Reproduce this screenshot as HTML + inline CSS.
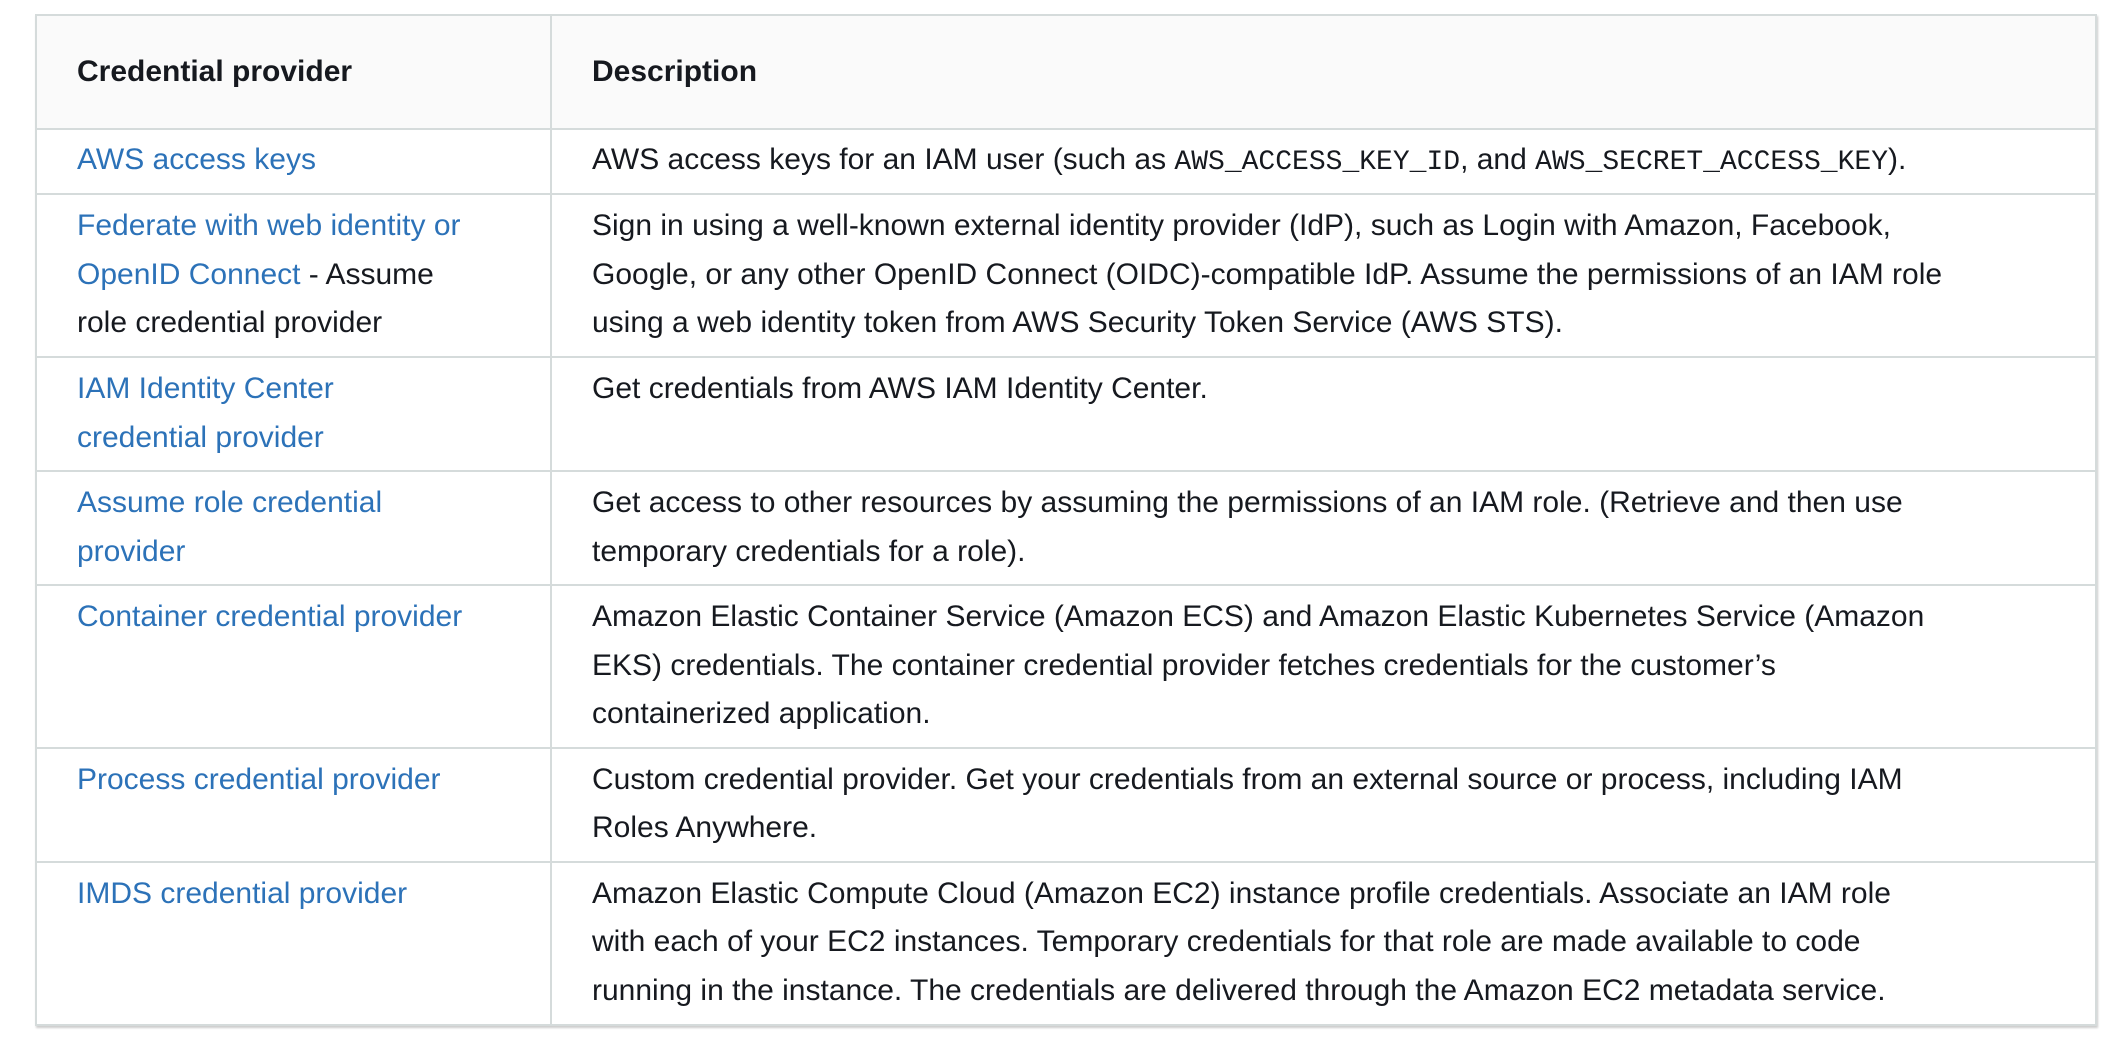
<!DOCTYPE html>
<html><head><meta charset="utf-8"><style>
html,body{margin:0;padding:0;background:#fff;width:2120px;height:1048px;overflow:hidden}
body{font-family:"Liberation Sans",sans-serif;font-size:30px;color:#16191f}
table{position:absolute;left:35px;top:14px;width:2062px;border-collapse:collapse;border:2px solid #d5dbdb;box-shadow:1px 2px 2px rgba(0,0,0,.2)}
td,th{border:2px solid #d5dbdb;vertical-align:top;text-align:left;padding:7px 40px 8px 40px;line-height:48.5px;white-space:nowrap}
th{background:#fafafa;font-weight:bold;vertical-align:middle;padding-top:0;padding-bottom:0}
td:first-child,th:first-child{width:433px}
a{color:#2c72b8;text-decoration:none}
code{font-family:"Liberation Mono",monospace;font-size:28px;line-height:1}
</style></head><body>
<table>
<tr style="height:114px"><th>Credential provider</th><th>Description</th></tr>
<tr style="height:65px"><td style="padding-top:6px;padding-bottom:6px"><a>AWS access keys</a></td><td style="padding-top:6px;padding-bottom:6px">AWS access keys for an IAM user (such as <code>AWS_ACCESS_KEY_ID</code>, and <code>AWS_SECRET_ACCESS_KEY</code>).</td></tr>
<tr style="height:163px"><td><a>Federate with web identity or<br>OpenID Connect</a> - Assume<br>role credential provider</td><td>Sign in using a well-known external identity provider (IdP), such as Login with Amazon, Facebook,<br>Google, or any other OpenID Connect (OIDC)-compatible IdP. Assume the permissions of an IAM role<br>using a web identity token from AWS Security Token Service (AWS STS).</td></tr>
<tr style="height:113px"><td><a>IAM Identity Center<br>credential provider</a></td><td>Get credentials from AWS IAM Identity Center.</td></tr>
<tr style="height:114px"><td><a>Assume role credential<br>provider</a></td><td>Get access to other resources by assuming the permissions of an IAM role. (Retrieve and then use<br>temporary credentials for a role).</td></tr>
<tr style="height:162px"><td><a>Container credential provider</a></td><td>Amazon Elastic Container Service (Amazon ECS) and Amazon Elastic Kubernetes Service (Amazon<br>EKS) credentials. The container credential provider fetches credentials for the customer’s<br>containerized application.</td></tr>
<tr style="height:113px"><td><a>Process credential provider</a></td><td>Custom credential provider. Get your credentials from an external source or process, including IAM<br>Roles Anywhere.</td></tr>
<tr style="height:163px"><td><a>IMDS credential provider</a></td><td>Amazon Elastic Compute Cloud (Amazon EC2) instance profile credentials. Associate an IAM role<br>with each of your EC2 instances. Temporary credentials for that role are made available to code<br>running in the instance. The credentials are delivered through the Amazon EC2 metadata service.</td></tr>
</table>
</body></html>
